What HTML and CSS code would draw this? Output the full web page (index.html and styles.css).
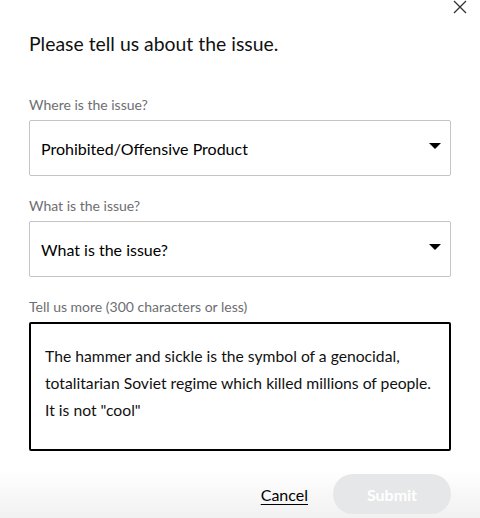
FILE: index.html
```html
<!DOCTYPE html>
<html lang="en">
<head>
<meta charset="utf-8">
<title>Report an issue</title>
<link rel="stylesheet" href="styles.css">
</head>
<body>
<div class="modal">
  <button class="close" aria-label="Close">
    <svg width="14" height="14" viewBox="0 0 14 14"><path d="M1 1 L13 13 M13 1 L1 13" stroke="#333" stroke-width="1.3" fill="none"/></svg>
  </button>
  <div class="content">
    <h1 class="title">Please tell us about the issue.</h1>
    <div class="field first">
      <label class="label">Where is the issue?</label>
      <div class="select"><span>Prohibited/Offensive Product</span><svg class="caret" width="12" height="6" viewBox="0 0 12 6"><path d="M0 0 H12 L6 6 Z" fill="#000"/></svg></div>
    </div>
    <div class="field">
      <label class="label">What is the issue?</label>
      <div class="select"><span>What is the issue?</span><svg class="caret" width="12" height="6" viewBox="0 0 12 6"><path d="M0 0 H12 L6 6 Z" fill="#000"/></svg></div>
    </div>
    <div class="field">
      <label class="label">Tell us more (300 characters or less)</label>
      <div class="textarea">The hammer and sickle is the symbol of a genocidal,<br>totalitarian Soviet regime which killed millions of people.<br>It is not "cool"</div>
    </div>
  </div>
  <div class="footer">
    <a class="cancel" href="#">Cancel</a>
    <button class="submit" disabled>Submit</button>
  </div>
</div>
</body>
</html>
```
FILE: styles.css
```css
html, body {
  margin: 0;
  padding: 0;
  background: #fff;
}
body {
  width: 480px;
  height: 518px;
  overflow: hidden;
  font-family: Lato, "Open Sans", sans-serif;
  color: #000;
}
.modal {
  position: relative;
  height: 518px;
  display: flex;
  flex-direction: column;
}
.close {
  position: absolute;
  top: 0;
  right: 13px;
  width: 14px;
  height: 14px;
  padding: 0;
  border: 0;
  background: none;
  line-height: 0;
}
.content {
  flex: 1;
  padding: 32px 29px 0 29px;
}
.title {
  margin: 0;
  font-size: 19.4px;
  font-weight: 400;
  line-height: 24px;
  color: #111;
}
.field {
  display: flex;
  flex-direction: column;
  gap: 7px;
  margin-top: 22px;
}
.field.first {
  margin-top: 41px;
}
.label {
  font-size: 14px;
  line-height: 16px;
  color: #6d6e71;
}
.select {
  height: 54px;
  border: 1px solid #c4c4c4;
  border-radius: 2px;
  display: flex;
  align-items: center;
  justify-content: space-between;
  padding: 0 9px 0 11px;
  font-size: 16px;
  color: #000;
}
.caret {
  margin-top: -4px;
}
.textarea {
  height: 106px;
  border: 2px solid #000;
  border-radius: 2px;
  padding: 19px 14px 0 14px;
  font-size: 15.7px;
  line-height: 27px;
  color: #111;
  white-space: nowrap;
}
.footer {
  height: 48px;
  display: flex;
  align-items: center;
  justify-content: flex-end;
  gap: 25px;
  padding: 0 29px 0 0;
  background: linear-gradient(to bottom, #ffffff 0%, #f1f1f1 100%);
}
.cancel {
  font-size: 16px;
  color: #000;
  text-decoration: underline;
  text-underline-offset: 3px;
}
.submit {
  width: 118px;
  height: 40px;
  border: 0;
  border-radius: 20px;
  background: #e6e7e8;
  color: #fff;
  font-family: inherit;
  font-size: 16px;
  font-weight: 700;
}
```
